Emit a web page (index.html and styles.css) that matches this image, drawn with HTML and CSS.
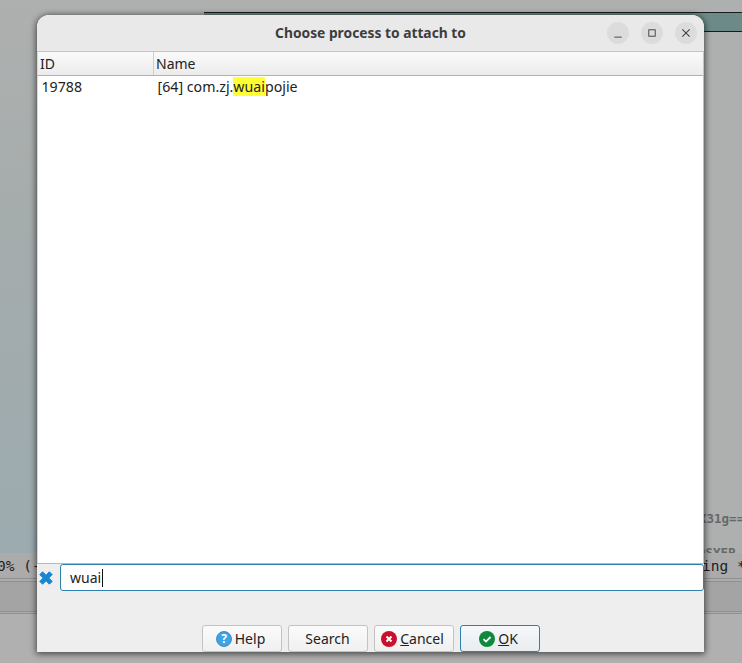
FILE: index.html
```html
<!DOCTYPE html>
<html lang="en">
<head>
<meta charset="utf-8">
<title>Choose process to attach to</title>
<link rel="stylesheet" href="styles.css">
</head>
<body>
<div class="desktop">
  <div class="bg-window"></div>
  <div class="bg-left"></div>
  <div class="bg-strip"></div>
  <div class="bg-text bg-a">0% (-</div>
  <div class="bg-text bg-b">ing *</div>
  <div class="bg-text bg-c">X31g==</div>
  <div class="bg-text bg-d">9SYFP</div>
  <div class="dialog">
    <header class="titlebar">
      <div class="title">Choose process to attach to</div>
      <div class="win-buttons">
        <span class="win-btn"><svg width="24" height="24" viewBox="0 0 24 24"><path d="M8 16.500h8" stroke="#3d3d3d" stroke-width="1" fill="none"/></svg></span>
        <span class="win-btn"><svg width="24" height="24" viewBox="0 0 24 24"><rect x="8.500" y="8.500" width="7" height="7" stroke="#3d3d3d" fill="none"/></svg></span>
        <span class="win-btn"><svg width="24" height="24" viewBox="0 0 24 24"><path d="M8 8l8 8M16 8l-8 8" stroke="#3d3d3d" stroke-width="1.100" fill="none"/></svg></span>
      </div>
    </header>
    <div class="table-head">
      <div class="col-id head-cell">ID</div>
      <div class="col-name head-cell">Name</div>
    </div>
    <div class="table-body">
      <div class="row">
        <div class="cell-id">19788</div>
        <div class="cell-name">[64] com.zj.<mark class="hit">wuai</mark>pojie</div>
      </div>
    </div>
    <div class="filter">
      <svg class="clear-icon" width="14" height="14" viewBox="0 0 14 14"><path d="M3.600 0.800 7 4.200 10.400 0.800 13.200 3.600 9.800 7 13.200 10.400 10.400 13.200 7 9.800 3.600 13.200 0.800 10.400 4.200 7 0.800 3.600Z" fill="#1787d4" stroke="#1787d4" stroke-width="1" stroke-linejoin="round"/></svg>
      <div class="input"><span>wuai</span><i class="caret"></i></div>
    </div>
    <div class="buttons">
      <button class="btn btn-icon">
        <svg width="16" height="16" viewBox="0 0 16 16"><circle cx="8" cy="8" r="7.500" fill="#3da5e6" stroke="#2b7fb8" stroke-width=".8"/><text x="8" y="12" class="glyph">?</text></svg><span>Help</span>
      </button>
      <button class="btn"><span>Search</span></button>
      <button class="btn btn-icon">
        <svg width="16" height="16" viewBox="0 0 16 16"><circle cx="8" cy="8" r="8" fill="#c8102e"/><path d="M5.500 5.500l5 5M10.500 5.500l-5 5" stroke="#fff" stroke-width="2"/></svg><span><u>C</u>ancel</span>
      </button>
      <button class="btn btn-icon btn-default">
        <svg width="16" height="16" viewBox="0 0 16 16"><circle cx="8" cy="8" r="8" fill="#0f8a3c"/><path d="M4.500 8.200l2.500 2.400 4.500-4.600" stroke="#fff" stroke-width="1.800" fill="none"/></svg><span><u>O</u>K</span>
      </button>
    </div>
  </div>
</div>
</body>
</html>
```
FILE: styles.css
```css
* { box-sizing: border-box; }
html, body { margin: 0; padding: 0; }
body { width: 742px; height: 663px; overflow: hidden; font-family: "Noto Sans", "Open Sans", sans-serif; }
.desktop { position: relative; width: 742px; height: 663px; overflow: hidden; background: #aeb0af; }
.bg-window { position: absolute; left: 204px; top: 12px; width: 538px; height: 20px; background: #6b8a88; border-top: 1px solid #1a1a1a; border-bottom: 1px solid #1a1a1a; }
.bg-left { position: absolute; left: 0; top: 0; width: 37px; height: 553px; background: linear-gradient(#aeb0af 0, #a6acac 200px, #9cabb0 553px); }
.bg-strip { position: absolute; left: 0; top: 553px; width: 742px; height: 110px; background: linear-gradient(#ababab 0 25px, #8f8f8f 25px 26px, #acacac 26px 28px, #8f8f8f 28px 29px, #a4a4a4 29px 58px, #8f8f8f 58px 59px, #acacac 59px 60px, #8f8f8f 60px 61px, #b0b0b0 61px); }
.bg-text { position: absolute; font-family: "DejaVu Sans Mono", monospace; font-size: 14.500px; line-height: 18px; color: #1d2020; white-space: nowrap; }
.bg-a { left: -3px; top: 557px; }
.bg-b { left: 702px; top: 557px; }
.bg-c { left: 699px; top: 510px; font-size: 12.500px; font-weight: bold; color: #686868; }
.bg-d { left: 698px; top: 544px; height: 9px; overflow: hidden; font-size: 12.500px; font-weight: bold; color: #686868; }
.dialog { position: absolute; left: 37px; top: 15px; width: 667px; height: 637px; display: flex; flex-direction: column; background: #eeeeee; border-radius: 12px 12px 0 0; box-shadow: 0 1px 6px 1px rgba(0, 0, 0, .6); overflow: hidden; }
.titlebar { position: relative; flex: none; height: 37px; background: #e9e9e9; border-bottom: 1px solid #c4c4c4; }
.title { text-align: center; font-size: 13.800px; font-weight: 700; line-height: 36px; color: #3d3d3d; }
.win-buttons { position: absolute; right: 7px; top: 7px; display: flex; gap: 12px; }
.win-btn { width: 22px; height: 22px; border-radius: 50%; background: #dcdcdc; display: flex; align-items: center; justify-content: center; }
.table-head { flex: none; height: 24px; display: flex; background: linear-gradient(#fafafa, #ececec); border-bottom: 1px solid #b2b2b2; border-left: 1px solid #d8d8d8; border-right: 1px solid #c4c4c4; }
.head-cell { font-size: 14px; line-height: 24px; color: #222; padding-left: 2px; }
.col-id { width: 116px; border-right: 1px solid #cfcfcf; }
.col-name { flex: 1; }
.table-body { flex: 1; background: #fff; border-left: 1px solid #d8d8d8; border-right: 1px solid #bdbdbd; min-height: 0; }
.row { display: flex; height: 22px; font-size: 14.200px; line-height: 22px; color: #222; }
.cell-id { width: 116px; padding-left: 3.500px; }
.cell-name { padding-left: 3.500px; }
.hit { background: #ffff33; color: inherit; }
.filter { flex: none; height: 28px; display: flex; align-items: center; background: #eeeeee; border-top: 1px solid #b9b9b9; }
.clear-icon { margin-left: 2px; flex: none; }
.input { margin-left: 7px; flex: 1; height: 27px; background: #fff; border: 1px solid #2f7fae; border-radius: 3px; padding-left: 9px; display: flex; align-items: center; font-size: 14px; color: #222; }
.caret { display: inline-block; width: 1px; height: 18px; background: #111; margin-left: 1px; }
.buttons { flex: none; height: 61px; display: flex; justify-content: center; align-items: flex-end; gap: 6px; }
.btn { width: 80px; height: 27px; margin: 0; padding: 0; display: flex; align-items: center; justify-content: center; gap: 3px; background: linear-gradient(#fbfbfb, #f0f0f0); border: 1px solid #c3c3c3; border-radius: 3px; font-family: inherit; font-size: 14px; color: #222; }
.btn-icon { padding-right: 2px; }
.btn-default { border-color: #2f7fae; background: linear-gradient(#f6f8fa, #e9edf0); }
.glyph { font-size: 12px; font-weight: 700; fill: #fff; text-anchor: middle; }
```
